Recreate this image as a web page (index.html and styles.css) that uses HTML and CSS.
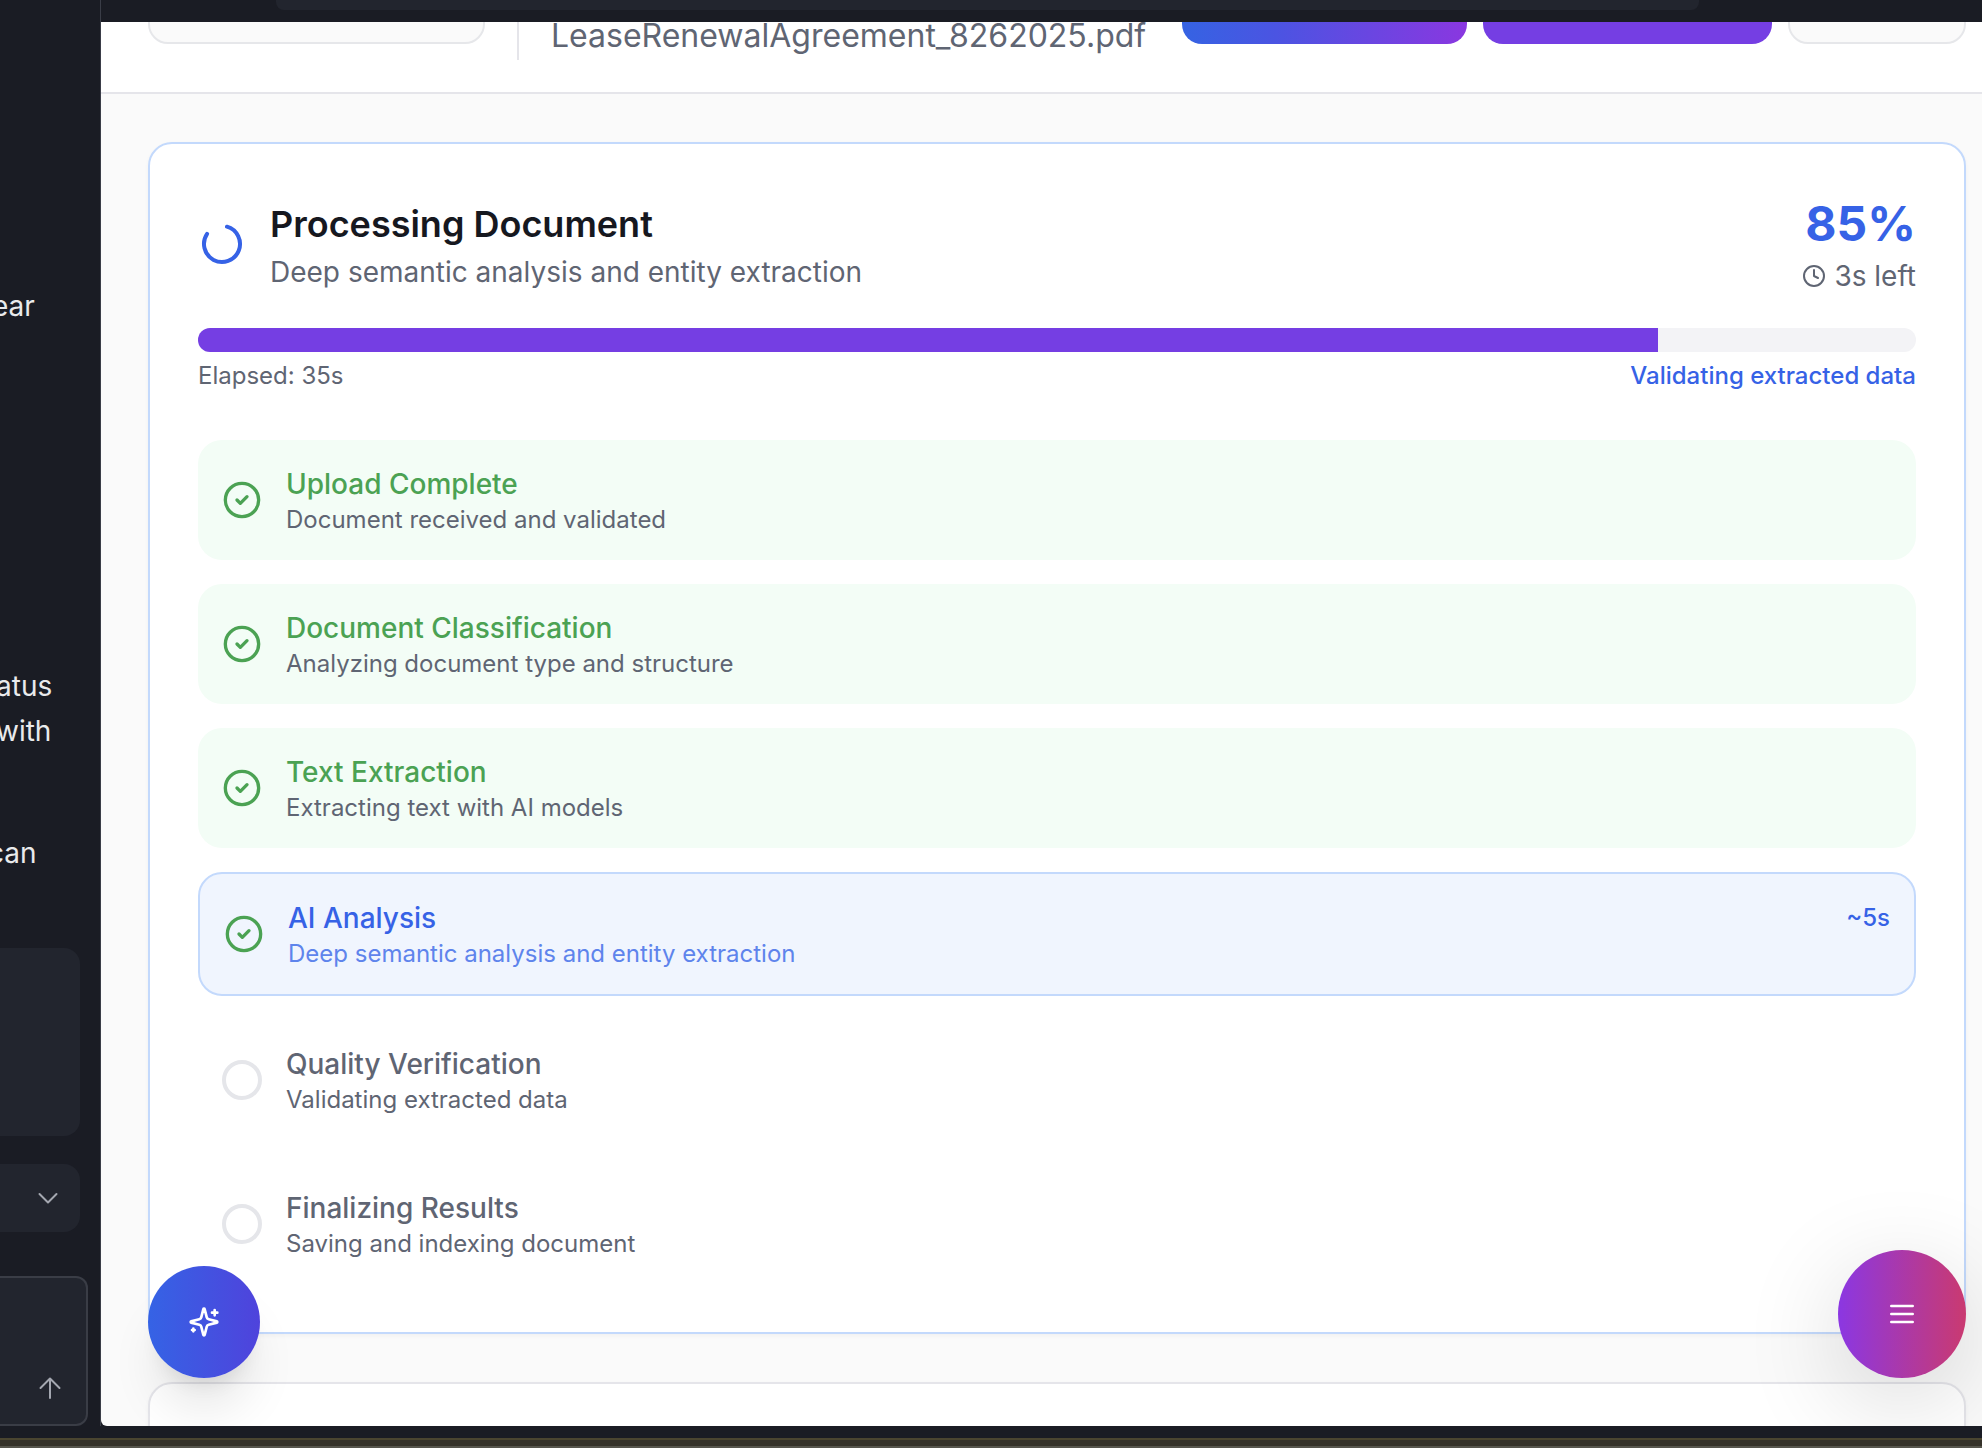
FILE: index.html
```html
<!DOCTYPE html>
<html lang="en">
<head>
<meta charset="utf-8">
<title>Processing Document</title>
<link rel="stylesheet" href="styles.css">
</head>
<body>
<div class="app">
  <aside class="chat">
    <div class="messages">
      <p class="message">ear</p>
      <p class="message message-long">atus<br>with</p>
      <p class="message message-last">can</p>
    </div>
    <div class="chat-block"></div>
    <button class="chat-toggle" type="button" aria-label="Expand">
      <svg width="24" height="24" viewBox="0 0 24 24"><path d="M3.500 8l8.500 8.500L20.500 8"/></svg>
    </button>
    <div class="composer">
      <textarea class="composer-input" aria-label="Message"></textarea>
      <button class="send" type="button" aria-label="Send">
        <svg width="24" height="24" viewBox="0 0 24 24"><path d="M12 22V2.500M2.500 12L12 2.500l9.500 9.500"/></svg>
      </button>
    </div>
  </aside>

  <div class="browser">
    <div class="toolbar"><div class="address"></div></div>
    <div class="page">
      <header class="header">
        <button class="button button-back" type="button" aria-label="Back"></button>
        <span class="divider"></span>
        <p class="filename">LeaseRenewalAgreement_8262025.pdf</p>
        <div class="actions">
          <button class="button button-gradient" type="button" aria-label="Analyze"></button>
          <button class="button button-purple" type="button" aria-label="Process"></button>
          <button class="button button-more" type="button" aria-label="More"></button>
        </div>
      </header>

      <main class="content">
        <section class="card card-active">
          <div class="card-head">
            <svg class="spinner" width="48" height="48" viewBox="0 0 24 24"><path d="M21 12a9 9 0 1 1-6.219-8.560" transform="rotate(-74 12 12)"/></svg>
            <div class="heading">
              <h1 class="title">Processing Document</h1>
              <p class="subtitle">Deep semantic analysis and entity extraction</p>
            </div>
            <div class="status">
              <div class="percent">85%</div>
              <div class="remaining">
                <svg width="24" height="24" viewBox="0 0 24 24"><circle cx="12" cy="12" r="10"/><path d="M12 6v6l4 2"/></svg>
                <span>3s left</span>
              </div>
            </div>
          </div>
          <div class="progress" role="progressbar" aria-valuenow="85"><div class="progress-fill" style="width:85%"></div></div>
          <div class="progress-info"><span>Elapsed: 35s</span><span class="current">Validating extracted data</span></div>

          <ol class="steps">
            <li class="step done">
              <svg class="check" width="40" height="40" viewBox="0 0 24 24"><circle cx="12" cy="12" r="10"/><path d="m9 12 2 2 4-4"/></svg>
              <div class="step-text"><h2 class="step-title">Upload Complete</h2><p class="step-note">Document received and validated</p></div>
            </li>
            <li class="step done">
              <svg class="check" width="40" height="40" viewBox="0 0 24 24"><circle cx="12" cy="12" r="10"/><path d="m9 12 2 2 4-4"/></svg>
              <div class="step-text"><h2 class="step-title">Document Classification</h2><p class="step-note">Analyzing document type and structure</p></div>
            </li>
            <li class="step done">
              <svg class="check" width="40" height="40" viewBox="0 0 24 24"><circle cx="12" cy="12" r="10"/><path d="m9 12 2 2 4-4"/></svg>
              <div class="step-text"><h2 class="step-title">Text Extraction</h2><p class="step-note">Extracting text with AI models</p></div>
            </li>
            <li class="step active">
              <svg class="check" width="40" height="40" viewBox="0 0 24 24"><circle cx="12" cy="12" r="10"/><path d="m9 12 2 2 4-4"/></svg>
              <div class="step-text"><h2 class="step-title">AI Analysis</h2><p class="step-note">Deep semantic analysis and entity extraction</p></div>
              <span class="estimate">~5s</span>
            </li>
            <li class="step">
              <span class="pending"></span>
              <div class="step-text"><h2 class="step-title">Quality Verification</h2><p class="step-note">Validating extracted data</p></div>
            </li>
            <li class="step">
              <span class="pending"></span>
              <div class="step-text"><h2 class="step-title">Finalizing Results</h2><p class="step-note">Saving and indexing document</p></div>
            </li>
          </ol>
        </section>
        <section class="card card-next"></section>
      </main>

      <button class="fab fab-assistant" type="button" aria-label="Assistant">
        <svg width="32" height="32" viewBox="0 0 24 24"><path d="M9.937 15.500A2 2 0 0 0 8.500 14.063l-6.135-1.582a.5.5 0 0 1 0-.962L8.500 9.936A2 2 0 0 0 9.937 8.500l1.582-6.135a.5.5 0 0 1 .963 0L14.063 8.500A2 2 0 0 0 15.500 9.937l6.135 1.581a.5.5 0 0 1 0 .964L15.500 14.063a2 2 0 0 0-1.437 1.437l-1.582 6.135a.5.5 0 0 1-.963 0z"/><path d="M20 3v4M22 5h-4M4 17v2M5 18H3"/></svg>
      </button>
      <button class="fab fab-menu" type="button" aria-label="Menu">
        <svg width="32" height="32" viewBox="0 0 24 24"><path d="M4 6h16M4 12h16M4 18h16"/></svg>
      </button>
    </div>
  </div>
</div>
<div class="desktop-edge"></div>
</body>
</html>
```
FILE: styles.css
```css
* { box-sizing: border-box; }

body {
  margin: 0;
  height: 100vh;
  display: flex;
  flex-direction: column;
  overflow: hidden;
  background: #1a1c24;
  color: #5f6573;
  font-family: Inter, "Liberation Sans", sans-serif;
}

h1, h2, p, ol { margin: 0; padding: 0; }

button { padding: 0; border: 0; font: inherit; }

svg {
  display: block;
  flex: none;
  fill: none;
  stroke: currentColor;
  stroke-width: 2;
  stroke-linecap: round;
  stroke-linejoin: round;
}

.app {
  flex: 1;
  min-height: 0;
  display: flex;
  padding-bottom: 12px;
}

/* Chat sidebar */
.chat {
  flex: none;
  width: 101px;
  display: flex;
  flex-direction: column;
  overflow: hidden;
  border-right: 1px solid #3a3d47;
}

.messages {
  flex: 1;
  padding-top: 284px;
  color: #e9eaec;
  font-size: 28px;
  line-height: 45px;
}

.message { margin-left: -8px; }
.message-long { margin-top: 335px; margin-left: -4px; }
.message-last { margin-top: 77px; margin-left: -12px; }

.chat-block {
  height: 188px;
  margin-right: 20px;
  border-radius: 0 16px 16px 0;
  background: #22252e;
}

.chat-toggle {
  height: 68px;
  margin: 28px 20px 44px 0;
  padding-right: 20px;
  display: flex;
  align-items: center;
  justify-content: flex-end;
  border-radius: 0 16px 16px 0;
  background: #22252e;
  color: #a4a7b0;
}

.composer {
  height: 150px;
  margin-right: 12px;
  padding: 0 24px 24px 0;
  display: flex;
  align-items: flex-end;
  border: 2px solid #3a3d46;
  border-left: 0;
  border-radius: 0 12px 12px 0;
  background: #22252e;
}

.composer-input {
  flex: 1;
  min-width: 0;
  height: 100%;
  padding: 0;
  border: 0;
  resize: none;
  background: transparent;
}

.send {
  background: transparent;
  color: #a4a7b0;
}

/* Browser frame */
.browser {
  flex: 1;
  min-width: 0;
  display: flex;
  flex-direction: column;
}

.toolbar {
  flex: none;
  height: 22px;
}

.address {
  height: 10px;
  margin: 0 283px 0 175px;
  border-radius: 0 0 8px 8px;
  background: #22252e;
}

.page {
  position: relative;
  flex: 1;
  min-height: 0;
  overflow: hidden;
  border-radius: 0 0 0 6px;
  background: #fafafa;
}

/* Header is scrolled partly under the toolbar */
.header {
  height: 146px;
  margin-top: -74px;
  padding: 0 16px 32px 47px;
  display: flex;
  align-items: center;
  border-bottom: 2px solid #e5e5ea;
  background: #fff;
}

.button {
  flex: none;
  height: 80px;
  border-radius: 20px;
}

.button-back {
  width: 337px;
  border: 2px solid #e6e7ea;
  background: #fafafa;
}

.divider {
  flex: none;
  width: 2px;
  height: 112px;
  margin: 0 32px;
  background: #e5e5ea;
}

.filename {
  padding-top: 64px;
  font-size: 32px;
  line-height: 40px;
}

.actions {
  display: flex;
  gap: 16px;
  margin-left: auto;
}

.button-gradient {
  width: 285px;
  background: linear-gradient(90deg, #3563e3, #4b54e2 33%, #8a37e0);
}

.button-purple { width: 289px; background: #753ee3; }

.button-more {
  width: 178px;
  border: 2px solid #e6e7ea;
  background: #fafafa;
}

/* Cards */
.content {
  padding: 48px 16px 48px 47px;
  display: flex;
  flex-direction: column;
  gap: 48px;
}

.card {
  padding: 48px;
  border: 2px solid #e5e5ea;
  border-radius: 24px;
  background: #fff;
  box-shadow: 0 2px 4px rgba(0, 0, 0, 0.04);
}

.card-active { border-color: #c3d9fc; }
.card-next { height: 200px; }

.card-head {
  display: flex;
  align-items: center;
  gap: 24px;
}

.spinner { color: #3662e6; }
.heading { flex: 1; }

.title {
  color: #16181f;
  font-size: 36px;
  font-weight: 600;
  line-height: 56px;
}

.subtitle,
.remaining {
  font-size: 28px;
  line-height: 40px;
}

.status {
  display: flex;
  flex-direction: column;
  align-items: flex-end;
}

.percent {
  color: #3662e6;
  font-size: 48px;
  font-weight: 700;
  line-height: 64px;
}

.remaining {
  display: flex;
  align-items: center;
  gap: 8px;
}

.progress {
  height: 24px;
  margin-top: 32px;
  overflow: hidden;
  border-radius: 12px;
  background: #f3f3f6;
}

.progress-fill {
  height: 100%;
  background: #753ee3;
}

.progress-info {
  margin-top: 8px;
  display: flex;
  justify-content: space-between;
  font-size: 24px;
  line-height: 32px;
}

.current {
  color: #3662e6;
  font-weight: 500;
}

/* Steps */
.steps {
  margin-top: 48px;
  display: flex;
  flex-direction: column;
  gap: 24px;
  list-style: none;
}

.step {
  padding: 24px;
  display: flex;
  align-items: center;
  gap: 24px;
  border-radius: 24px;
}

.step-text { flex: 1; }

.step-title {
  font-size: 28px;
  font-weight: 500;
  line-height: 40px;
}

.step-note {
  font-size: 24px;
  line-height: 32px;
}

.check { color: #4ba253; }

.done { background: #f3fdf6; }
.done .step-title { color: #4ba253; }

.active {
  border: 2px solid #c3d9fc;
  background: #f0f5fe;
}

.active .step-title { color: #3662e6; }
.active .step-note { color: #5e84ec; }

.estimate {
  align-self: flex-start;
  color: #3662e6;
  font-size: 24px;
  font-weight: 500;
  line-height: 40px;
}

.pending {
  width: 40px;
  height: 40px;
  border: 4px solid #e5e6ea;
  border-radius: 50%;
}

/* Floating buttons */
.fab {
  position: absolute;
  bottom: 48px;
  display: flex;
  align-items: center;
  justify-content: center;
  border-radius: 50%;
  color: #fff;
}

.fab-assistant {
  left: 47px;
  width: 112px;
  height: 112px;
  background: linear-gradient(90deg, #3563e5, #4f43dc);
  box-shadow: 0 40px 50px -10px rgba(0, 0, 0, 0.1), 0 16px 20px -12px rgba(0, 0, 0, 0.1);
}

.fab-menu {
  right: 16px;
  width: 128px;
  height: 128px;
  background: linear-gradient(90deg, #8b37e2, #ca3a70);
  box-shadow: 0 24px 100px rgba(0, 0, 0, 0.16);
}

.desktop-edge {
  flex: none;
  height: 10px;
  border-top: 2px solid #4a4530;
  border-bottom: 2px solid #57564d;
  background: #36332a;
}
```
